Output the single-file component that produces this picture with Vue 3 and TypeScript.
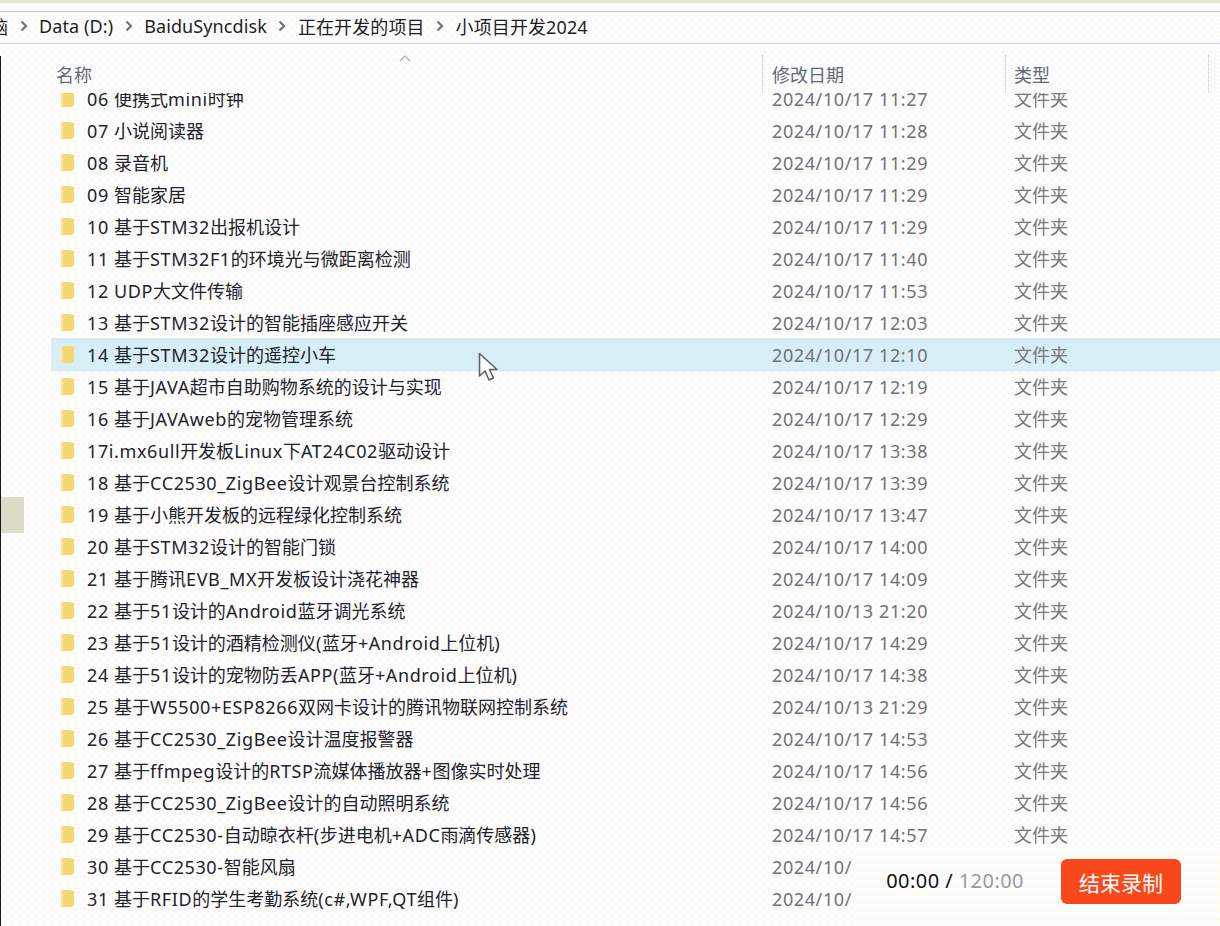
<script setup lang="ts">
interface Row { name: string; date: string; type?: string; hot?: boolean }
const rows: Row[] = [
  { name: '06 便携式mini时钟', date: '2024/10/17 11:27', type: '文件夹' },
  { name: '07 小说阅读器', date: '2024/10/17 11:28', type: '文件夹' },
  { name: '08 录音机', date: '2024/10/17 11:29', type: '文件夹' },
  { name: '09 智能家居', date: '2024/10/17 11:29', type: '文件夹' },
  { name: '10 基于STM32出报机设计', date: '2024/10/17 11:29', type: '文件夹' },
  { name: '11 基于STM32F1的环境光与微距离检测', date: '2024/10/17 11:40', type: '文件夹' },
  { name: '12 UDP大文件传输', date: '2024/10/17 11:53', type: '文件夹' },
  { name: '13 基于STM32设计的智能插座感应开关', date: '2024/10/17 12:03', type: '文件夹' },
  { name: '14 基于STM32设计的遥控小车', date: '2024/10/17 12:10', type: '文件夹', hot: true },
  { name: '15 基于JAVA超市自助购物系统的设计与实现', date: '2024/10/17 12:19', type: '文件夹' },
  { name: '16 基于JAVAweb的宠物管理系统', date: '2024/10/17 12:29', type: '文件夹' },
  { name: '17i.mx6ull开发板Linux下AT24C02驱动设计', date: '2024/10/17 13:38', type: '文件夹' },
  { name: '18 基于CC2530_ZigBee设计观景台控制系统', date: '2024/10/17 13:39', type: '文件夹' },
  { name: '19 基于小熊开发板的远程绿化控制系统', date: '2024/10/17 13:47', type: '文件夹' },
  { name: '20 基于STM32设计的智能门锁', date: '2024/10/17 14:00', type: '文件夹' },
  { name: '21 基于腾讯EVB_MX开发板设计浇花神器', date: '2024/10/17 14:09', type: '文件夹' },
  { name: '22 基于51设计的Android蓝牙调光系统', date: '2024/10/13 21:20', type: '文件夹' },
  { name: '23 基于51设计的酒精检测仪(蓝牙+Android上位机)', date: '2024/10/17 14:29', type: '文件夹' },
  { name: '24 基于51设计的宠物防丢APP(蓝牙+Android上位机)', date: '2024/10/17 14:38', type: '文件夹' },
  { name: '25 基于W5500+ESP8266双网卡设计的腾讯物联网控制系统', date: '2024/10/13 21:29', type: '文件夹' },
  { name: '26 基于CC2530_ZigBee设计温度报警器', date: '2024/10/17 14:53', type: '文件夹' },
  { name: '27 基于ffmpeg设计的RTSP流媒体播放器+图像实时处理', date: '2024/10/17 14:56', type: '文件夹' },
  { name: '28 基于CC2530_ZigBee设计的自动照明系统', date: '2024/10/17 14:56', type: '文件夹' },
  { name: '29 基于CC2530-自动晾衣杆(步进电机+ADC雨滴传感器)', date: '2024/10/17 14:57', type: '文件夹' },
  { name: '30 基于CC2530-智能风扇', date: '2024/10/' },
  { name: '31 基于RFID的学生考勤系统(c#,WPF,QT组件)', date: '2024/10/' },
]
const crumbs = ['Data (D:)', 'BaiduSyncdisk', '正在开发的项目', '小项目开发2024']

// Latin runs are spaced a little wider than the CJK runs, as in the reference.
function runs(text: string): { t: string; lat: boolean }[] {
  return (text.match(/[\x00-\x7f]+|[^\x00-\x7f]+/g) ?? []).map((t) => ({
    t,
    lat: t.charCodeAt(0) < 128,
  }))
}
</script>

<template>
  <div class="page">
    <div class="topstrip"></div>
    <nav class="crumbs">
      <span class="cut">脑</span>
      <template v-for="c in crumbs" :key="c">
        <svg class="sep" width="8" height="12" viewBox="0 0 8 12"><path d="M1.500 1.500 6 6l-4.500 4.500" fill="none" stroke="#6f7378" stroke-width="2.200"/></svg>
        <span>{{ c }}</span>
      </template>
    </nav>
    <header class="head">
      <svg class="sort" width="12" height="7" viewBox="0 0 12 7"><path d="M1 6 6 1l5 5" fill="none" stroke="#a9acb2" stroke-width="1.200"/></svg>
      <div class="c-name">名称</div>
      <div class="c-date">修改日期</div>
      <div class="c-type">类型</div>
      <div class="c-end"></div>
    </header>
    <main class="list">
      <div class="rows">
        <div v-for="r in rows" :key="r.name" class="row" :class="{ hot: r.hot }">
          <div class="cell-name">
            <svg class="folder" width="16" height="19" viewBox="0 0 16 19"><path d="M2 1h8l5 1.500V17l-5 1H2z" fill="#fae3a0"/><path d="M4 1h6l5 1.500V17l-5 1H4z" fill="#f7d56f"/></svg>
            <span><span v-for="(p, i) in runs(r.name)" :key="i" :class="{ lat: p.lat }">{{ p.t }}</span></span>
          </div>
          <div class="cell-date">{{ r.date }}</div>
          <div class="cell-type">{{ r.type }}</div>
        </div>
      </div>
    </main>
    <div class="edge"></div>
    <div class="blip"></div>
    <svg class="cursor" width="21" height="30" viewBox="0 0 21 30"><path d="M1.500 1.500V24l5.500-5 4 9 4.500-2-4-8.500h7.500z" fill="#fbfcfe" stroke="#5d6266" stroke-width="1.600" stroke-linejoin="round"/></svg>
    <div class="rec">
      <div class="timer">00:00 / <span>120:00</span></div>
      <button class="stop" type="button">结束录制</button>
    </div>
  </div>
</template>

<style>
html, body { margin: 0; background: #fcfcff; }
</style>

<style scoped>
.page {
  position: relative;
  width: 1220px;
  height: 926px;
  overflow: hidden;
  box-sizing: border-box;
  font-family: "Noto Sans", "Noto Sans CJK SC", sans-serif;
  font-size: 18px;
  background-color: #fcfcff;
  background-image: radial-gradient(circle, #fdf9cc 0.7px, transparent 0.8px);
  background-size: 8px 8px;
}
.topstrip {
  box-sizing: border-box;
  height: 12px;
  border-top: 3px solid #e6e6dc;
  border-bottom: 1px solid #c9c9d6;
}
.crumbs {
  box-sizing: border-box;
  height: 32px;
  padding-bottom: 3px;
  border-bottom: 1px solid #d4d4e2;
  display: flex;
  align-items: center;
  gap: 11.5px;
  color: #1d1f24;
  white-space: nowrap;
  letter-spacing: 0.1px;
}
.cut { margin-left: -10px; width: 18px; flex: none; }
.sep { flex: none; }
.lat { letter-spacing: 0.6px; }
.head {
  position: relative;
  display: grid;
  grid-template-columns: 711px 243px 203px 1fr;
  height: 49px;
  margin-left: 51px;
  color: #5f6a78;
}
.head > div { padding-left: 5px; height: 38px; margin-top: 11px; line-height: 40px; box-sizing: border-box; }
.head .c-date, .head .c-end { border-left: 1px dotted #c6c8d0; padding-left: 9px; }
.head .c-type { border-left: 1px dotted #c6c8d0; padding-left: 8px; }
.sort { position: absolute; left: 348px; top: 11px; }
.list { height: 833px; overflow: hidden; }
.rows { margin-top: -11px; }
.row {
  display: grid;
  grid-template-columns: 711px 243px 1fr;
  height: 32px;
  margin-left: 51px;
  align-items: center;
}
.row.hot { background: #d8eef6; box-shadow: 0 1px 0 #d8eef6; }
.cell-name { display: flex; align-items: center; gap: 12px; padding-left: 8px; color: #1f232b; white-space: nowrap; }
.folder { flex: none; }
.cell-date { padding-left: 10px; padding-top: 1px; color: #6f7276; white-space: nowrap; letter-spacing: 0.6px; }
.cell-type { padding-left: 9px; color: #77797c; }
.edge { position: absolute; left: 0; top: 56px; bottom: 0; width: 1px; background: #1a1a1a; }
.blip { position: absolute; left: 1px; top: 497px; width: 23px; height: 36px; background: #dcdcc8; }
.cursor { position: absolute; left: 478px; top: 352px; }
.rec {
  position: absolute;
  left: 855px;
  top: 851px;
  right: 0;
  bottom: 0;
  display: flex;
  align-items: center;
  justify-content: flex-end;
  gap: 37px;
  padding: 8px 39px 22px 0;
  box-sizing: border-box;
  background-color: #fcfcff;
  background-image: radial-gradient(circle, #fdf9cc 0.7px, transparent 0.8px);
  background-size: 8px 8px;
}
.timer { font-size: 20px; color: #111; letter-spacing: 0.45px; white-space: nowrap; position: relative; top: -1px; }
.timer span { color: #999; }
.stop {
  width: 120px;
  height: 45px;
  flex: none;
  border: 0;
  border-radius: 6px;
  background: #f8481c;
  color: #fff;
  font: inherit;
  font-size: 21px;
  padding: 0;
}
</style>
